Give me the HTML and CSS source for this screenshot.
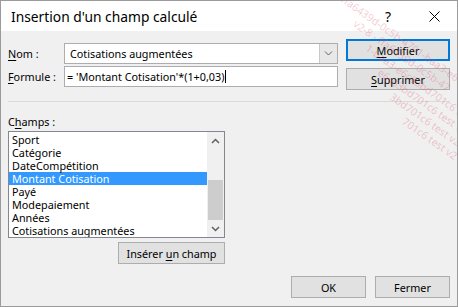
FILE: index.html
```html
<!doctype html>
<html>
<head>
    <meta charset="utf-8">
    <title>Insertion d'un champ calculé</title>
    <link rel="stylesheet" href="styles.css">
</head>
<body>
<div class="window">
    <div class="titlebar">
        <span class="title">Insertion d'un champ calculé</span>
        <span class="cap-btn help">?</span>
        <span class="cap-btn">
            <svg width="11" height="11" viewBox="0 0 11 11"><path d="M0.5 0.5L10.5 10.5M10.5 0.5L0.5 10.5" stroke="#000" stroke-width="1" fill="none"/></svg>
        </span>
    </div>
    <div class="content">
        <div class="top">
            <div class="fields">
                <div class="field-row">
                    <label class="lbl"><u>N</u>om :</label>
                    <div class="combo">
                        <span class="combo-text">Cotisations augmentées</span>
                        <span class="combo-btn">
                            <svg width="9" height="5" viewBox="0 0 9 5"><path d="M1 0.5L4.5 4L8 0.5" stroke="#606060" stroke-width="1" fill="none"/></svg>
                        </span>
                    </div>
                </div>
                <div class="field-row">
                    <label class="lbl"><u>F</u>ormule :</label>
                    <div class="textbox"><span>= 'Montant Cotisation'*(1+0,03)</span><span class="caret"></span></div>
                </div>
            </div>
            <div class="side">
                <button class="btn btn-default"><span><u>M</u>odifier</span></button>
                <button class="btn"><span><u>S</u>upprimer</span></button>
            </div>
        </div>
        <div class="sep"></div>
        <div class="champs-lbl">C<u>h</u>amps :</div>
        <div class="listbox">
            <ul class="items">
                <li>Sport</li>
                <li>Catégorie</li>
                <li>DateCompétition</li>
                <li class="sel">Montant Cotisation</li>
                <li>Payé</li>
                <li>Modepaiement</li>
                <li>Années</li>
                <li>Cotisations augmentées</li>
            </ul>
            <div class="vscroll">
                <div class="arrow">
                    <svg width="9" height="6" viewBox="0 0 9 6"><path d="M1 5L4.5 1.5L8 5" stroke="#606060" stroke-width="1.5" fill="none"/></svg>
                </div>
                <div class="track"><div class="thumb"></div></div>
                <div class="arrow">
                    <svg width="9" height="6" viewBox="0 0 9 6"><path d="M1 1L4.5 4.5L8 1" stroke="#606060" stroke-width="1.5" fill="none"/></svg>
                </div>
            </div>
        </div>
        <div class="insert-row">
            <button class="btn btn-insert"><span>Insérer <u>u</u>n champ</span></button>
        </div>
        <div class="footer">
            <button class="btn btn-foot">OK</button>
            <button class="btn btn-foot">Fermer</button>
        </div>
    </div>
    <div class="watermark">
        <div class="wm-line" style="padding-left:0">ffa6439d-0c5b-4701-baa3-e6c6</div>
        <div class="wm-line" style="padding-left:24px">v2-8 - ffa6439d-0c5b-47</div>
        <div class="wm-line" style="padding-left:48px">1-baa3-e6c63bd701c6 test</div>
        <div class="wm-line" style="padding-left:72px">e6c63bd701c6 test v2</div>
        <div class="wm-line" style="padding-left:96px">3bd701c6 test v2-8</div>
        <div class="wm-line" style="padding-left:120px">701c6 test v2</div>
    </div>
</div>
</body>
</html>
```

FILE: styles.css
```css
body{margin:0; padding:0; background:#fff; font-family:"Noto Sans","Open Sans",sans-serif; font-size:10.8px; color:#000;}
u{text-decoration:underline; text-underline-offset:2px;}

.window{width:458px; height:307px; box-sizing:border-box; border:1px solid #9b9b9b; background:#f0f0f0; display:flex; flex-direction:column; position:relative; overflow:hidden;}

.titlebar{height:30px; flex-shrink:0; background:#fff; display:flex; align-items:center;}
.title{flex:1; padding-left:10px; font-size:13.8px;}
.cap-btn{width:46px; height:30px; display:flex; align-items:center; justify-content:center;}
.help{font-size:14px;}

.content{flex:1; padding:8px 7px 0 7px; display:flex; flex-direction:column;}
.top{display:flex; gap:8px;}
.fields{width:330px; padding-top:4px; display:flex; flex-direction:column; gap:2px;}
.field-row{height:21px; display:flex; align-items:center;}
.lbl{width:56px; line-height:15px;}

.combo{width:274px; height:21px; box-sizing:border-box; border:1px solid #adadad; background:#fff; display:flex;}
.combo-text{flex:1; padding-left:5px; line-height:19px; white-space:nowrap;}
.combo-btn{width:17px; border-left:1px solid #c9c9c9; background:#e8e8e8; display:flex; align-items:center; justify-content:center;}

.textbox{width:274px; height:21px; box-sizing:border-box; border:1px solid #abadb3; background:#fff; padding-left:2px; line-height:19px; white-space:nowrap; display:flex; align-items:center;}
.caret{width:1px; height:13px; background:#000; margin-left:1px;}

.side{width:104px; display:flex; flex-direction:column; gap:7px;}
.btn{height:22px; box-sizing:border-box; border:1px solid #adadad; background:#e1e1e1; font:inherit; color:#000; padding:0; display:flex; align-items:center; justify-content:center; white-space:nowrap;}
.btn-default{border:2px solid #0078d7;}

.sep{height:1px; background:#dadada; margin-top:11px;}
.champs-lbl{margin-top:12px; line-height:15px;}

.listbox{margin-top:2px; width:217px; height:107px; box-sizing:border-box; border:1px solid #828790; background:#fff; display:flex;}
.items{flex:1; list-style:none; margin:0; padding:1px 0 0 0; overflow:hidden;}
.items li{height:13px; line-height:13px; padding-left:3px; white-space:nowrap;}
.items li.sel{background:#3399ff; color:#fff;}
.vscroll{width:17px; background:#f0f0f0; display:flex; flex-direction:column;}
.arrow{height:17px; display:flex; align-items:center; justify-content:center;}
.track{flex:1; display:flex; flex-direction:column; justify-content:flex-end;}
.thumb{height:40px; margin:0 1px; background:#cdcdcd;}

.insert-row{width:217px; margin-top:4px; display:flex; justify-content:flex-end;}
.btn-insert{width:107px;}

.footer{margin-top:12px; display:flex; justify-content:flex-end; gap:9px;}
.btn-foot{width:75px;}

.watermark{position:absolute; left:345px; top:-8px; transform:rotate(35deg); transform-origin:0 0; color:rgba(225,90,120,0.32); font-size:10.5px; line-height:13px; white-space:nowrap; pointer-events:none;}
```
